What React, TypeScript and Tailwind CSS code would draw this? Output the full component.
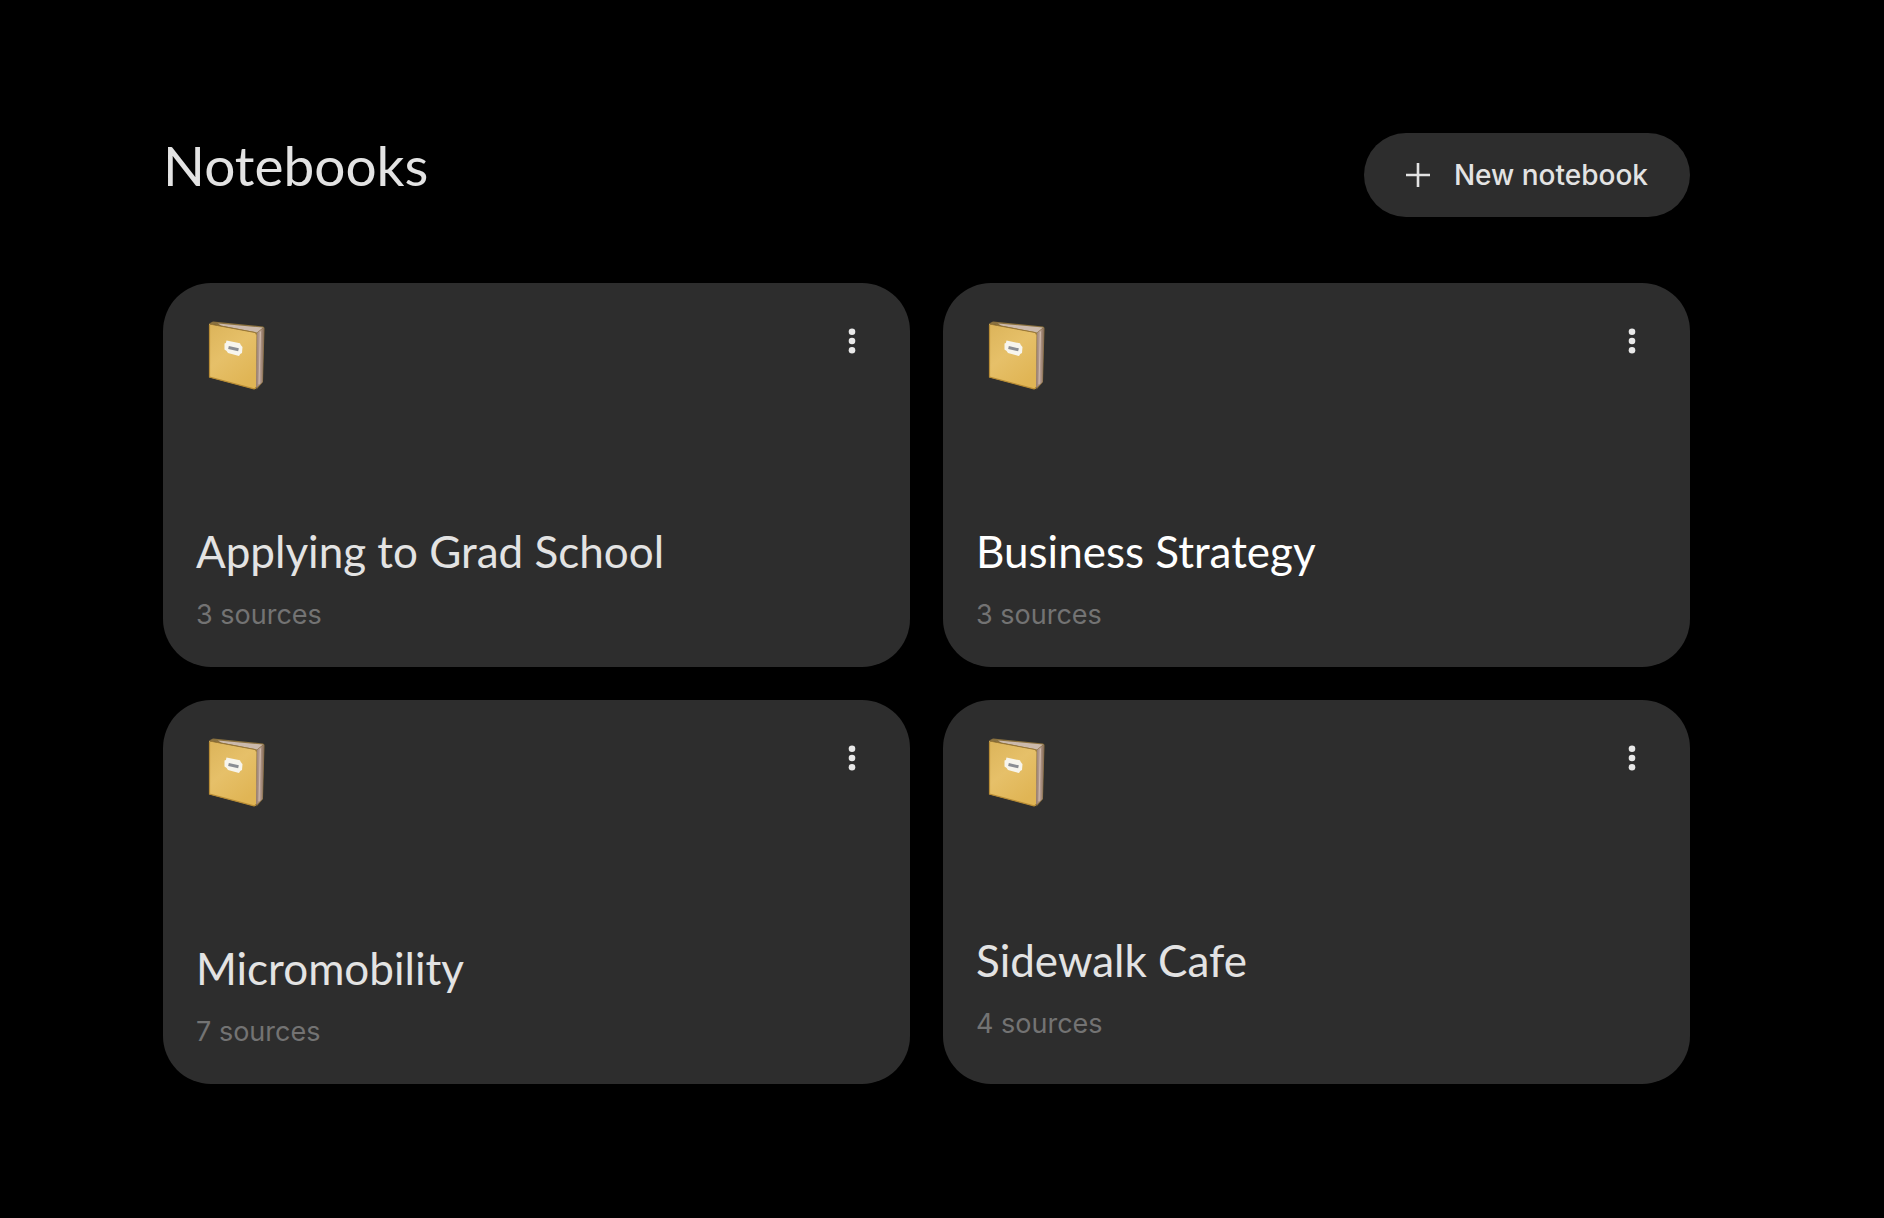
import React from "react";

type Notebook = {
  id: number;
  title: string;
  sources: number;
  titleClass: string;
  cardClass: string;
};

const notebooks: Notebook[] = [
  {id: 1, title: "Applying to Grad School", sources: 3, titleClass: "text-[#e3e3e3]", cardClass: "pb-8"},
  {id: 2, title: "Business Strategy", sources: 3, titleClass: "text-white", cardClass: "pb-8"},
  {id: 3, title: "Micromobility", sources: 7, titleClass: "text-[#e3e3e3]", cardClass: "pb-8"},
  {id: 4, title: "Sidewalk Cafe", sources: 4, titleClass: "text-[#e3e3e3]", cardClass: "pb-10"},
];

const BookIcon: React.FC = () => (
  <svg viewBox="0 0 60 72" className="w-[60px] h-[72px]" aria-hidden="true">
    <defs>
      <linearGradient id="cover" x1="0" y1="0" x2="0.6" y2="1">
        <stop offset="0" stopColor="#dcb45a"/>
        <stop offset="0.5" stopColor="#e6c069"/>
        <stop offset="1" stopColor="#e0b555"/>
      </linearGradient>
      <linearGradient id="pages" x1="0" y1="0" x2="1" y2="0">
        <stop offset="0" stopColor="#8d7466"/>
        <stop offset="0.5" stopColor="#bba397"/>
        <stop offset="1" stopColor="#856a55"/>
      </linearGradient>
    </defs>
    <path d="M2 3.5 L6 1.5 L56 6.5 Q57.500 7 57.500 8.500 L56 62 L49.500 69.500 L49 13 Z" fill="#8a713f"/>
    <path d="M11 3.500 L56 7.500 L50 12.500 L14 5.500 Z" fill="#cbb9ab"/>
    <path d="M50 13 L57 7.500 L55.500 62 L48.500 68.500 Z" fill="url(#pages)"/>
    <path d="M53.500 11.500 L52 64" stroke="#cdb7aa" strokeWidth="1"/>
    <path d="M2 4 L48 12.500 Q49.500 13 49.500 14.500 L49 67.500 Q49 69.500 47 69 L3 57.500 Q2 57 2 56 Z" fill="url(#cover)"/>
    <path d="M2.500 4 L48 12.500 Q49.200 13 49.200 14.500" fill="none" stroke="#9a7836" strokeWidth="1"/>
    <path d="M2.500 5 L2.500 57 L47 68.800 Q48.500 69 48.700 67" fill="none" stroke="#b88c35" strokeWidth="1.200"/>
    <path d="M19.500 20.500 L33 23.300 Q33.500 25.500 35.500 27 L35 33 Q33 33.500 32 36 L21 33 Q20 30.500 17.500 29.500 L17.500 23.500 Q19.500 23 19.500 20.500 Z" fill="#f7f5ed"/>
    <path d="M21.500 27.500 L31.500 29.800" stroke="#8b8e94" strokeWidth="3"/>
  </svg>
);

const MenuIcon: React.FC = () => (
  <svg viewBox="0 0 24 32" className="w-6 h-8" fill="#e8e8e8" aria-hidden="true">
    <circle cx="12" cy="6.700" r="3.300"/>
    <circle cx="12" cy="16" r="3.300"/>
    <circle cx="12" cy="25.300" r="3.300"/>
  </svg>
);

const PlusIcon: React.FC = () => (
  <svg viewBox="0 0 24 24" className="w-6 h-6" stroke="#e3e3e3" strokeWidth="2.600" aria-hidden="true">
    <path d="M12 0 V24 M0 12 H24"/>
  </svg>
);

const NotebookCard: React.FC<{notebook: Notebook}> = ({notebook}) => (
  <article className={`flex min-h-[384px] flex-col justify-between rounded-[48px] bg-[#2d2d2d] px-[33px] pt-[37px] ${notebook.cardClass}`}>
    <div className="flex items-start justify-between">
      <div className="pl-[11px]">
        <BookIcon/>
      </div>
      <button className="mt-[5px] mr-[13px] cursor-pointer" aria-label={`Options for ${notebook.title}`}>
        <MenuIcon/>
      </button>
    </div>
    <div className="flex flex-col gap-4">
      <h2 className={`text-[44px] leading-[56px] ${notebook.titleClass}`}>{notebook.title}</h2>
      <p className="font-['Inter',sans-serif] text-[27px] leading-10 text-[#737373]">{notebook.sources} sources</p>
    </div>
  </article>
);

const App: React.FC = () => {
  return (
    <main className="min-h-screen bg-black pt-[133px] pr-[194px] pb-16 pl-[163px] font-['Lato',sans-serif]">
      <header className="mb-[66px] flex items-start justify-between">
        <h1 className="text-[55px] leading-[64px] text-[#e3e3e3]">Notebooks</h1>
        <button className="flex h-[84px] cursor-pointer items-center gap-6 rounded-full bg-[#2d2d2d] px-[42px] font-['Inter',sans-serif] text-[28px] font-medium text-[#e3e3e3]">
          <PlusIcon/>
          New notebook
        </button>
      </header>
      <section className="grid grid-cols-2 gap-[33px]">
        {notebooks.map((notebook) =>
          <NotebookCard key={notebook.id} notebook={notebook}/>
        )}
      </section>
    </main>
  );
};

export default App;
